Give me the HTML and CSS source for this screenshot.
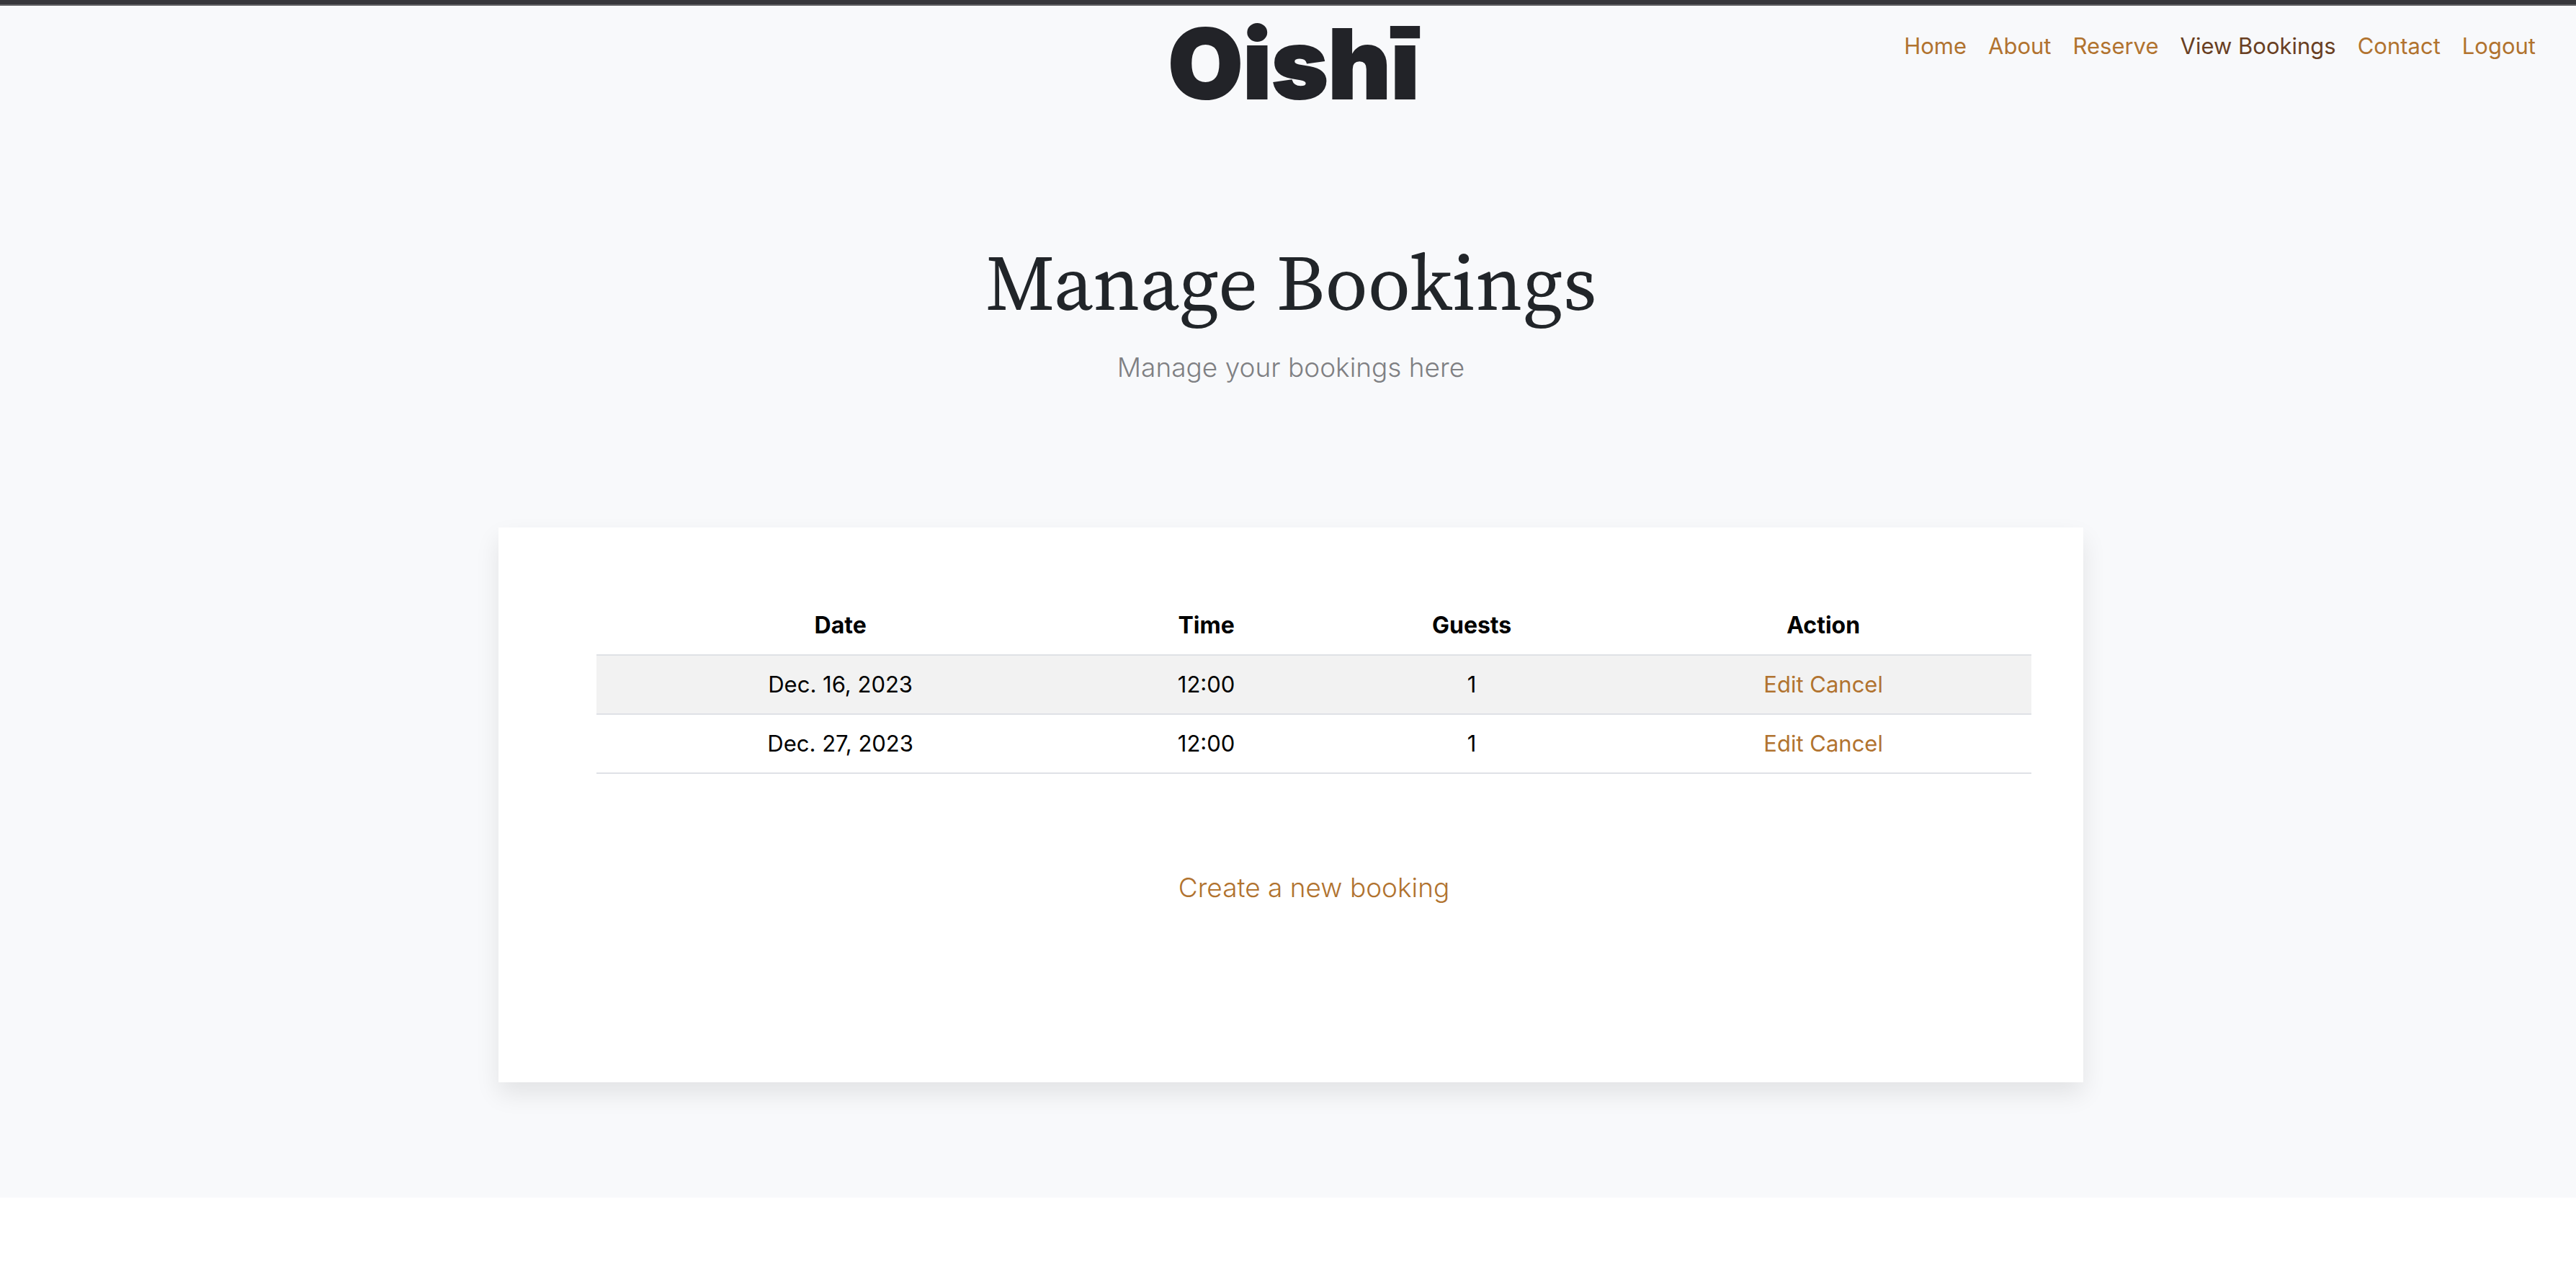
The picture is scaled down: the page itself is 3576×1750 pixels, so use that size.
FILE: index.html
```html
<!DOCTYPE html>
<html lang="en">
<head>
  <meta charset="utf-8">
  <meta name="viewport" content="width=device-width, initial-scale=1">
  <title>Manage Bookings</title>
  <link rel="stylesheet" href="styles.css">
</head>
<body>
  <div class="page">
    <header class="site-header">
      <a class="logo" href="#">Oishī</a>
      <nav class="site-nav" aria-label="Main">
        <a class="nav-link" href="#">Home</a>
        <a class="nav-link" href="#">About</a>
        <a class="nav-link" href="#">Reserve</a>
        <a class="nav-link nav-link-active" href="#" aria-current="page">View Bookings</a>
        <a class="nav-link" href="#">Contact</a>
        <a class="nav-link" href="#">Logout</a>
      </nav>
    </header>
    <main class="content">
      <div class="intro">
        <h1 class="title">Manage Bookings</h1>
        <p class="lead">Manage your bookings here</p>
      </div>
      <section class="card">
        <table class="bookings">
          <colgroup>
            <col class="col-date">
            <col class="col-time">
            <col class="col-guests">
            <col class="col-action">
          </colgroup>
          <thead>
            <tr>
              <th scope="col">Date</th>
              <th scope="col">Time</th>
              <th scope="col">Guests</th>
              <th scope="col">Action</th>
            </tr>
          </thead>
          <tbody>
            <tr>
              <td>Dec. 16, 2023</td>
              <td>12:00</td>
              <td>1</td>
              <td><a class="link" href="#">Edit</a> <a class="link" href="#">Cancel</a></td>
            </tr>
            <tr>
              <td>Dec. 27, 2023</td>
              <td>12:00</td>
              <td>1</td>
              <td><a class="link" href="#">Edit</a> <a class="link" href="#">Cancel</a></td>
            </tr>
          </tbody>
        </table>
        <p class="create"><a class="link" href="#">Create a new booking</a></p>
      </section>
    </main>
  </div>
</body>
</html>
```

FILE: styles.css
```css
* {
  box-sizing: border-box;
}

body {
  margin: 0;
  background: #fff;
  color: #212529;
  font-family: Inter, "Liberation Sans", sans-serif;
  font-size: 31px;
  line-height: 48px;
}

.page {
  border-top: 6px solid #37373b;
  background: #f8f9fb;
}

.site-header {
  display: grid;
  grid-template-columns: 1fr auto 1fr;
  align-items: start;
  padding: 12px 56px 12px 72px;
  border-top: 2px solid #626265;
}

.logo {
  grid-column: 2;
  color: #222328;
  font-size: 134px;
  font-weight: 900;
  line-height: 136px;
  text-decoration: none;
  -webkit-text-stroke: 2px #222328;
}

.site-nav {
  display: flex;
  justify-content: flex-end;
  gap: 30px;
  padding-top: 20px;
}

.nav-link,
.link {
  color: #b1732f;
  text-decoration: none;
}

.nav-link {
  white-space: nowrap;
}

.nav-link-active {
  color: #693f22;
}

.content {
  padding: 156px 0 160px 8px;
}

.intro {
  margin-bottom: 192px;
  text-align: center;
}

.title {
  margin: 0 0 20px;
  font-family: "Source Serif 4", "Source Serif Pro", "Liberation Serif", serif;
  font-size: 108px;
  font-weight: 400;
  line-height: 136px;
}

.lead {
  margin: 0;
  color: #7f8083;
  font-size: 37px;
  font-weight: 300;
  line-height: 60px;
}

.card {
  max-width: 2200px;
  margin: 0 auto;
  padding: 96px 72px 240px 136px;
  background: #fff;
  box-shadow: 0 16px 32px rgba(0, 0, 0, 0.09);
}

.bookings {
  width: 100%;
  border-collapse: collapse;
  table-layout: fixed;
  color: #000;
  text-align: center;
}

.bookings th,
.bookings td {
  padding: 16px;
  border-bottom: 2px solid #dfe1e6;
}

.bookings th {
  font-size: 32px;
  font-weight: 700;
}

.bookings tbody tr:nth-child(odd) {
  background: #f2f2f2;
}

.col-date {
  width: 34%;
}

.col-time {
  width: 17%;
}

.col-guests {
  width: 20%;
}

.col-action {
  width: 29%;
}

.create {
  margin: 128px 0 0;
  font-size: 37px;
  font-weight: 300;
  line-height: 60px;
  text-align: center;
}
```
